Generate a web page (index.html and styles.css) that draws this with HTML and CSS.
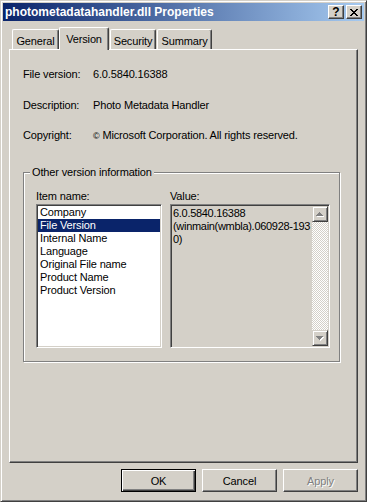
FILE: index.html
```html
<!DOCTYPE html>
<html>
<head>
<meta charset="utf-8">
<link rel="stylesheet" href="styles.css">
</head>
<body>
<div class="win">
  <div class="titlebar">
    <span class="title">photometadatahandler.dll Properties</span>
    <div class="capbtns">
      <div class="capbtn help">?</div>
      <div class="capbtn close">
        <svg width="8" height="7" viewBox="0 0 8 7"><path d="M0 0h2v1H0zM6 0h2v1H6zM1 1h2v1H1zM5 1h2v1H5zM2 2h4v1H2zM3 3h2v1H3zM2 4h4v1H2zM1 5h2v1H1zM5 5h2v1H5zM0 6h2v1H0zM6 6h2v1H6z" fill="#000"/></svg>
      </div>
    </div>
  </div>
  <div class="body">
    <div class="tabs">
      <div class="tab t-general">General</div>
      <div class="tab active t-version">Version</div>
      <div class="tab t-security">Security</div>
      <div class="tab t-summary">Summary</div>
    </div>
    <div class="panel">
      <div class="fields">
        <div class="field"><span class="lbl">File version:</span><span class="val">6.0.5840.16388</span></div>
        <div class="field"><span class="lbl">Description:</span><span class="val">Photo Metadata Handler</span></div>
        <div class="field"><span class="lbl">Copyright:</span><span class="val"><span class="copy">©</span> Microsoft Corporation. All rights reserved.</span></div>
      </div>
      <div class="group">
        <div class="legend">Other version information</div>
        <div class="cols">
          <div class="col">
            <div class="collbl">Item name:</div>
            <div class="listbox">
              <div class="item">Company</div>
              <div class="item sel">File Version</div>
              <div class="item">Internal Name</div>
              <div class="item">Language</div>
              <div class="item">Original File name</div>
              <div class="item">Product Name</div>
              <div class="item">Product Version</div>
            </div>
          </div>
          <div class="col">
            <div class="collbl">Value:</div>
            <div class="valuebox">
              <div class="valtext">
                <div>6.0.5840.16388</div>
                <div>(winmain(wmbla).060928-193</div>
                <div>0)</div>
              </div>
              <div class="vscroll">
                <div class="sbtn">
                  <svg width="8" height="5" viewBox="0 0 8 5"><path d="M4 1h1v1h1v1h1v1h1v1H1V4h1V3h1V2h1z" fill="#fff"/><path d="M3 0h1v1h1v1h1v1h1v1H0V3h1V2h1V1h1z" fill="#808080"/></svg>
                </div>
                <div class="track"></div>
                <div class="sbtn">
                  <svg width="8" height="5" viewBox="0 0 8 5"><path d="M1 1h7v1H7v1H6v1H5v1H4V4H3V3H2V2H1z" fill="#fff"/><path d="M0 0h7v1H6v1H5v1H4v1H3V3H2V2H1V1H0z" fill="#808080"/></svg>
                </div>
              </div>
            </div>
          </div>
        </div>
      </div>
    </div>
    <div class="buttons">
      <div class="btn default">OK</div>
      <div class="btn">Cancel</div>
      <div class="btn disabled">Apply</div>
    </div>
  </div>
</div>
</body>
</html>
```
FILE: styles.css
```css
* { box-sizing: border-box; }
html, body { margin: 0; padding: 0; }
body {
  width: 367px;
  height: 502px;
  overflow: hidden;
  background: #d4d0c8;
  font-family: "Liberation Sans", Arial, sans-serif;
  font-size: 11px;
  letter-spacing: -0.15px;
  color: #000;
}
.win {
  width: 367px;
  height: 502px;
  display: flex;
  flex-direction: column;
  background: #d4d0c8;
  border: 1px solid;
  border-color: #d4d0c8 #404040 #404040 #d4d0c8;
  box-shadow: inset 1px 1px 0 #fff, inset -1px -1px 0 #808080;
  padding: 2px;
}
.titlebar {
  flex: none;
  height: 18px;
  display: flex;
  align-items: center;
  padding: 0 2px;
  background: linear-gradient(to right, #0a246a, #a6caf0);
}
.title {
  flex: 1;
  color: #fff;
  font-weight: bold;
  font-size: 12px;
  letter-spacing: 0;
  white-space: nowrap;
}
.capbtns { display: flex; gap: 2px; }
.capbtn {
  width: 16px;
  height: 14px;
  display: flex;
  align-items: center;
  justify-content: center;
  background: #d4d0c8;
  border: 1px solid;
  border-color: #fff #404040 #404040 #fff;
  box-shadow: inset -1px -1px 0 #808080;
}
.help {
  font-weight: bold;
  font-size: 12px;
  letter-spacing: 0;
  line-height: 12px;
  padding-bottom: 1px;
}
.close svg { display: block; }
.body {
  flex: 1;
  display: flex;
  flex-direction: column;
  padding: 6px 6px 7px 6px;
}
.tabs {
  flex: none;
  height: 22px;
  display: flex;
  align-items: flex-end;
  padding-left: 3px;
  position: relative;
  z-index: 1;
}
.tab {
  height: 20px;
  display: flex;
  align-items: center;
  justify-content: center;
  padding-top: 2px;
  background: #d4d0c8;
  border-top: 1px solid #fff;
  border-left: 1px solid #fff;
  border-right: 1px solid #404040;
  box-shadow: inset -1px 0 0 #808080;
  border-radius: 2px 2px 0 0;
  white-space: nowrap;
}
.t-general { width: 47px; }
.t-version { width: 50px; }
.t-security { width: 46px; margin-left: 1px; }
.t-summary { width: 55px; margin-left: 1px; }
.tab.active {
  height: 23px;
  margin-bottom: -1px;
  padding-top: 0;
  padding-bottom: 1px;
}
.panel {
  flex: none;
  height: 414px;
  display: flex;
  flex-direction: column;
  padding-left: 13px;
  border: 1px solid;
  border-color: #fff #404040 #404040 #fff;
  box-shadow: inset -1px -1px 0 #808080;
}
.fields { display: flex; flex-direction: column; margin-top: 18px; }
.field { display: flex; height: 13px; line-height: 13px; white-space: nowrap; }
.field:nth-child(2) { margin-top: 18px; }
.field:nth-child(3) { margin-top: 17px; }
.lbl { width: 70px; flex: none; }
.copy { font-size: 9px; }
.group {
  width: 317px;
  height: 190px;
  margin-top: 30px;
  border: 1px solid #808080;
  box-shadow: inset 1px 1px 0 #fff, 1px 1px 0 #fff;
  display: flex;
  flex-direction: column;
  padding: 0 0 0 12px;
}
.legend {
  align-self: flex-start;
  height: 13px;
  line-height: 13px;
  margin: -7px 0 0 -6px;
  padding: 0 2px;
  background: #d4d0c8;
  white-space: nowrap;
}
.cols { display: flex; gap: 8px; margin-top: 11px; }
.col { display: flex; flex-direction: column; }
.collbl { height: 13px; line-height: 13px; margin-bottom: 1px; }
.listbox {
  width: 126px;
  height: 144px;
  background: #fff;
  border: 1px solid;
  border-color: #808080 #fff #fff #808080;
  box-shadow: inset 1px 1px 0 #404040, inset -1px -1px 0 #d4d0c8;
  padding: 1px;
}
.item { height: 13px; line-height: 13px; padding-left: 2px; white-space: nowrap; }
.item.sel { background: #0a246a; color: #fff; }
.valuebox {
  width: 160px;
  height: 144px;
  display: flex;
  background: #d4d0c8;
  border: 1px solid;
  border-color: #808080 #fff #fff #808080;
  box-shadow: inset 1px 1px 0 #404040, inset -1px -1px 0 #d4d0c8;
  padding: 1px;
}
.valtext {
  flex: 1;
  padding: 1px 0 0 1px;
  line-height: 13px;
  letter-spacing: -0.3px;
  white-space: nowrap;
  overflow: hidden;
}
.vscroll { width: 16px; flex: none; display: flex; flex-direction: column; }
.sbtn {
  width: 16px;
  height: 16px;
  flex: none;
  display: flex;
  align-items: center;
  justify-content: center;
  background: #d4d0c8;
  border: 1px solid;
  border-color: #d4d0c8 #404040 #404040 #d4d0c8;
  box-shadow: inset 1px 1px 0 #fff, inset -1px -1px 0 #808080;
}
.sbtn svg { display: block; }
.track {
  flex: 1;
  background: repeating-conic-gradient(#fff 0 25%, #d4d0c8 0 50%) 0 0 / 2px 2px;
}
.buttons {
  flex: none;
  display: flex;
  justify-content: flex-end;
  gap: 6px;
  margin-top: 6px;
}
.btn {
  width: 75px;
  height: 23px;
  display: flex;
  align-items: center;
  justify-content: center;
  border: 1px solid;
  border-color: #fff #404040 #404040 #fff;
  box-shadow: inset -1px -1px 0 #808080;
}
.btn.default {
  border-color: #000;
  box-shadow: inset 1px 1px 0 #fff, inset -1px -1px 0 #404040, inset -2px -2px 0 #808080;
}
.btn.disabled { color: #808080; text-shadow: 1px 1px 0 #fff; }
```
